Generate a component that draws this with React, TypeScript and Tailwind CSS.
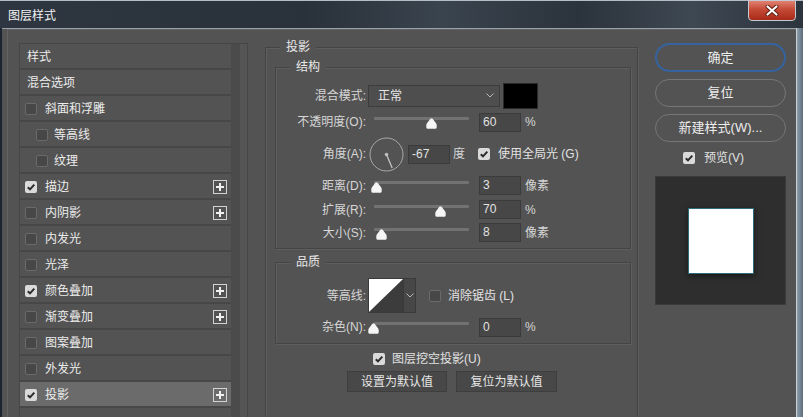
import React from "react";

type Item = {
  label: string;
  header?: boolean;
  check?: boolean;
  sub?: boolean;
  plus?: boolean;
  active?: boolean;
};

const items: Item[] = [
  { label: "样式", header: true },
  { label: "混合选项", header: true },
  { label: "斜面和浮雕" },
  { label: "等高线", sub: true },
  { label: "纹理", sub: true },
  { label: "描边", check: true, plus: true },
  { label: "内阴影", plus: true },
  { label: "内发光" },
  { label: "光泽" },
  { label: "颜色叠加", check: true, plus: true },
  { label: "渐变叠加", plus: true },
  { label: "图案叠加" },
  { label: "外发光" },
  { label: "投影", check: true, plus: true, active: true },
];

function Check({ checked }: { checked?: boolean }) {
  if (checked) {
    return (
      <span className="w-[12px] h-[12px] shrink-0 rounded-[2px] bg-[#dadada] flex items-center justify-center">
        <svg width="10" height="10" viewBox="0 0 10 10">
          <path d="M1.8 5.2 L4 7.4 L8.3 2.6" fill="none" stroke="#2b2b2b" strokeWidth="2" />
        </svg>
      </span>
    );
  }
  return <span className="block w-[12px] h-[12px] shrink-0 rounded-[2px] bg-[#474747] border border-[#6a6a6a]" />;
}

function Plus() {
  return (
    <span className="ml-auto w-[14px] h-[14px] border border-[#d2d2d2] flex items-center justify-center">
      <svg width="10" height="10" viewBox="0 0 10 10">
        <path d="M5 1 V9 M1 5 H9" stroke="#f0f0f0" strokeWidth="2" />
      </svg>
    </span>
  );
}

function Slider({ at }: { at: number }) {
  return (
    <div className="relative w-[95px] h-[18px] shrink-0">
      <div className="absolute left-0 right-0 top-[4px] h-[3px] bg-[#727272] rounded-[1px]" />
      <svg className="absolute top-[5px]" style={{ left: at - 5.5 }} width="11" height="11" viewBox="0 0 11 11">
        <path
          d="M5.5 0.3 Q6.2 0.3 7 1.3 L10.2 5.6 Q10.7 6.4 10.7 7.4 L10.7 9.6 Q10.7 10.7 9.6 10.7 L1.4 10.7 Q0.3 10.7 0.3 9.6 L0.3 7.4 Q0.3 6.4 0.8 5.6 L4 1.3 Q4.8 0.3 5.5 0.3 Z"
          fill="#f5f5f5"
        />
      </svg>
    </div>
  );
}

function Field({ value, w = "w-[42px]" }: { value: string; w?: string }) {
  return (
    <div className={`${w} h-[19px] shrink-0 bg-[#474747] border border-[#3b3b3b] pl-[3px] text-[12px] leading-[17px] text-[#e2e2e2]`}>
      {value}
    </div>
  );
}

function Label({ text }: { text: string }) {
  return <div className="w-[90px] shrink-0 text-right text-[12px] text-[#d6d6d6] whitespace-nowrap">{text}</div>;
}

function SliderRow({ label, at, value, unit, h }: { label: string; at: number; value: string; unit: string; h: string }) {
  return (
    <div className={`flex items-center ${h}`}>
      <Label text={label} />
      <div className="ml-[8px]">
        <Slider at={at} />
      </div>
      <div className="ml-[10px]">
        <Field value={value} />
      </div>
      <span className="ml-[4px] text-[12px] text-[#d6d6d6]">{unit}</span>
    </div>
  );
}

function Chevron() {
  return (
    <svg width="8" height="5" viewBox="0 0 8 5">
      <path d="M0.5 0.5 L4 4 L7.5 0.5" fill="none" stroke="#b8b8b8" strokeWidth="1" />
    </svg>
  );
}

function Group({ title, className, children }: { title: string; className: string; children: React.ReactNode }) {
  return (
    <div className={`relative border border-[#444444] shadow-[inset_1px_1px_0_#5e5e5e,1px_1px_0_#5e5e5e] ${className}`}>
      <span className="absolute -top-[9px] left-[14px] px-[6px] bg-[#535353] text-[12px] leading-[16px] text-[#e8e8e8]">
        {title}
      </span>
      {children}
    </div>
  );
}

export default function App() {
  return (
    <div className="w-[803px] h-[417px] overflow-hidden flex flex-col bg-[#27303a] font-['Liberation_Sans','Noto_Sans_CJK_SC',sans-serif]">
      {/* title bar */}
      <div className="relative h-[28px] shrink-0 border-t border-[#b4bcc4] bg-[linear-gradient(90deg,#2e3741_0%,#29313a_38%,#3a444e_55%,#2b333c_72%,#3e4852_86%,#2c343d_100%)] flex items-center pt-[2px]">
        <span className="ml-[8px] text-[12px] text-[#f2f2f2]">图层样式</span>
        <div className="absolute right-[7px] -top-[1px] w-[48px] h-[21px] rounded-b-[4px] border border-[#c3cad1] bg-[linear-gradient(180deg,#e08272_0%,#c44a36_45%,#a82a18_100%)] flex items-center justify-center">
          <svg width="14" height="11" viewBox="0 0 14 11">
            <path d="M2.5 1.5 L11.5 9.5 M11.5 1.5 L2.5 9.5" stroke="#5a1a10" strokeWidth="4" strokeLinecap="round" />
            <path d="M2.5 1.5 L11.5 9.5 M11.5 1.5 L2.5 9.5" stroke="#ffffff" strokeWidth="2.2" strokeLinecap="round" />
          </svg>
        </div>
      </div>

      <div className="flex-1 flex min-h-0">
        <div className="w-[2px] shrink-0 bg-[#1c2530]" />
        {/* dialog body */}
        <div className="flex-1 flex bg-[#535353] border-t border-[#9aa1a8] pl-[5px]">
          <div className="flex-1 flex items-start border-l border-t border-[#636363] pl-[11px] pt-[13px]">
            {/* style list */}
            <div className="w-[229px] h-[380px] shrink-0 flex border border-[#464646] bg-[#555555]">
              <div className="w-[211px] shrink-0 bg-[#535353]">
                {items.map((it) => (
                  <div
                    key={it.label}
                    className={`h-[26px] flex items-center border-b-2 border-[#474747] pt-[2px] pr-[4px] text-[12px] text-[#ececec] ${
                      it.active ? "bg-[#6b6b6b]" : ""
                    } ${it.header ? "pl-[7px]" : it.sub ? "pl-[16px]" : "pl-[5px]"}`}
                  >
                    {!it.header && <Check checked={it.check} />}
                    <span className={it.header ? "" : it.sub ? "ml-[6px]" : "ml-[8px]"}>{it.label}</span>
                    {it.plus && <Plus />}
                  </div>
                ))}
              </div>
              <div className="w-[9px] shrink-0 bg-[#4b4b4b]" />
            </div>

            {/* settings */}
            <Group title="投影" className="ml-[17px] mt-[4px] w-[373px] h-[400px] shrink-0 pt-[19px] pl-[9px] pr-[6px]">
              <Group title="结构" className="pt-[14px] pb-[4px]">
                <div className="flex items-center h-[27px]">
                  <Label text="混合模式:" />
                  <div className="ml-[2px] w-[132px] h-[22px] bg-[#4e4e4e] border border-[#3c3c3c] flex items-center pl-[9px] pr-[5px] text-[12px] text-[#e6e6e6]">
                    <span>正常</span>
                    <span className="ml-auto flex">
                      <Chevron />
                    </span>
                  </div>
                  <div className="ml-[3px] w-[35px] h-[26px] bg-black border border-[#2a2a2a]" />
                </div>
                <SliderRow label="不透明度(O):" at={57} value="60" unit="%" h="h-[26px]" />
                <div className="flex items-center h-[38px]">
                  <Label text="角度(A):" />
                  <svg className="ml-[3px] shrink-0" width="35" height="35" viewBox="0 0 35 35">
                    <circle cx="17.5" cy="17.5" r="16.5" fill="none" stroke="#a9a9a9" strokeWidth="1" />
                    <circle cx="17.5" cy="17.5" r="1.8" fill="#bdbdbd" />
                    <path d="M17.5 17.5 L23.2 31" stroke="#c4c4c4" strokeWidth="1.3" />
                  </svg>
                  <div className="ml-[4px]">
                    <Field value="-67" />
                  </div>
                  <span className="ml-[3px] text-[12px] text-[#d6d6d6]">度</span>
                  <span className="ml-[13px]">
                    <Check checked />
                  </span>
                  <span className="ml-[8px] text-[12px] text-[#e2e2e2]">使用全局光 (G)</span>
                </div>
                <SliderRow label="距离(D):" at={2} value="3" unit="像素" h="h-[25px]" />
                <SliderRow label="扩展(R):" at={66} value="70" unit="%" h="h-[23px]" />
                <SliderRow label="大小(S):" at={7} value="8" unit="像素" h="h-[23px]" />
              </Group>

              <Group title="品质" className="mt-[13px] pt-[15px] pb-[2px]">
                <div className="flex items-center h-[35px]">
                  <Label text="等高线:" />
                  <div className="ml-[2px] flex h-[35px] border border-[#3a3a3a]">
                    <svg width="34" height="33" viewBox="0 0 34 33">
                      <rect width="34" height="33" fill="#3c3c3c" />
                      <path d="M0 0 H34 L0 33 Z" fill="#ffffff" />
                    </svg>
                    <div className="w-[12px] bg-[#474747] border-l border-[#3a3a3a] flex items-center justify-center">
                      <Chevron />
                    </div>
                  </div>
                  <span className="ml-[13px]">
                    <Check />
                  </span>
                  <span className="ml-[7px] text-[12px] text-[#e2e2e2]">消除锯齿 (L)</span>
                </div>
                <SliderRow label="杂色(N):" at={-1} value="0" unit="%" h="h-[28px]" />
              </Group>

              <div className="mt-[9px] ml-[98px] flex items-center h-[12px]">
                <Check checked />
                <span className="ml-[7px] text-[12px] text-[#e2e2e2]">图层挖空投影(U)</span>
              </div>
              <div className="mt-[6px] flex justify-center gap-[9px] pr-[2px]">
                <div className="w-[100px] h-[21px] bg-[#484848] border border-[#3e3e3e] flex items-center justify-center text-[12px] text-[#e6e6e6]">
                  设置为默认值
                </div>
                <div className="w-[101px] h-[21px] bg-[#484848] border border-[#3e3e3e] flex items-center justify-center text-[12px] text-[#e6e6e6]">
                  复位为默认值
                </div>
              </div>
            </Group>

            {/* buttons + preview */}
            <div className="ml-[17px] w-[131px] shrink-0 flex flex-col">
              <div className="h-[29px] rounded-full border-2 border-[#35639f] flex items-center justify-center text-[13px] text-[#ededed]">
                确定
              </div>
              <div className="mt-[7px] h-[28px] rounded-full border border-[#767676] flex items-center justify-center text-[13px] text-[#ededed]">
                复位
              </div>
              <div className="mt-[7px] h-[28px] rounded-full border border-[#767676] flex items-center justify-center text-[13px] text-[#ededed]">
                新建样式(W)...
              </div>
              <div className="mt-[8px] h-[16px] flex items-center pl-[28px]">
                <Check checked />
                <span className="ml-[9px] text-[12px] text-[#e2e2e2]">预览(V)</span>
              </div>
              <div className="mt-[10px] h-[129px] bg-[#2e2e2e] border border-[#3a3a3a] flex items-center justify-center">
                <div className="w-[66px] h-[66px] bg-white border border-[#2d6b7d] shadow-[0_2px_6px_rgba(0,0,0,0.5)]" />
              </div>
            </div>
          </div>
        </div>
        <div className="w-[7px] shrink-0 border-l border-[#c8d0d8] bg-[linear-gradient(90deg,#8e9dab,#5e6d7c)]" />
      </div>
    </div>
  );
}
